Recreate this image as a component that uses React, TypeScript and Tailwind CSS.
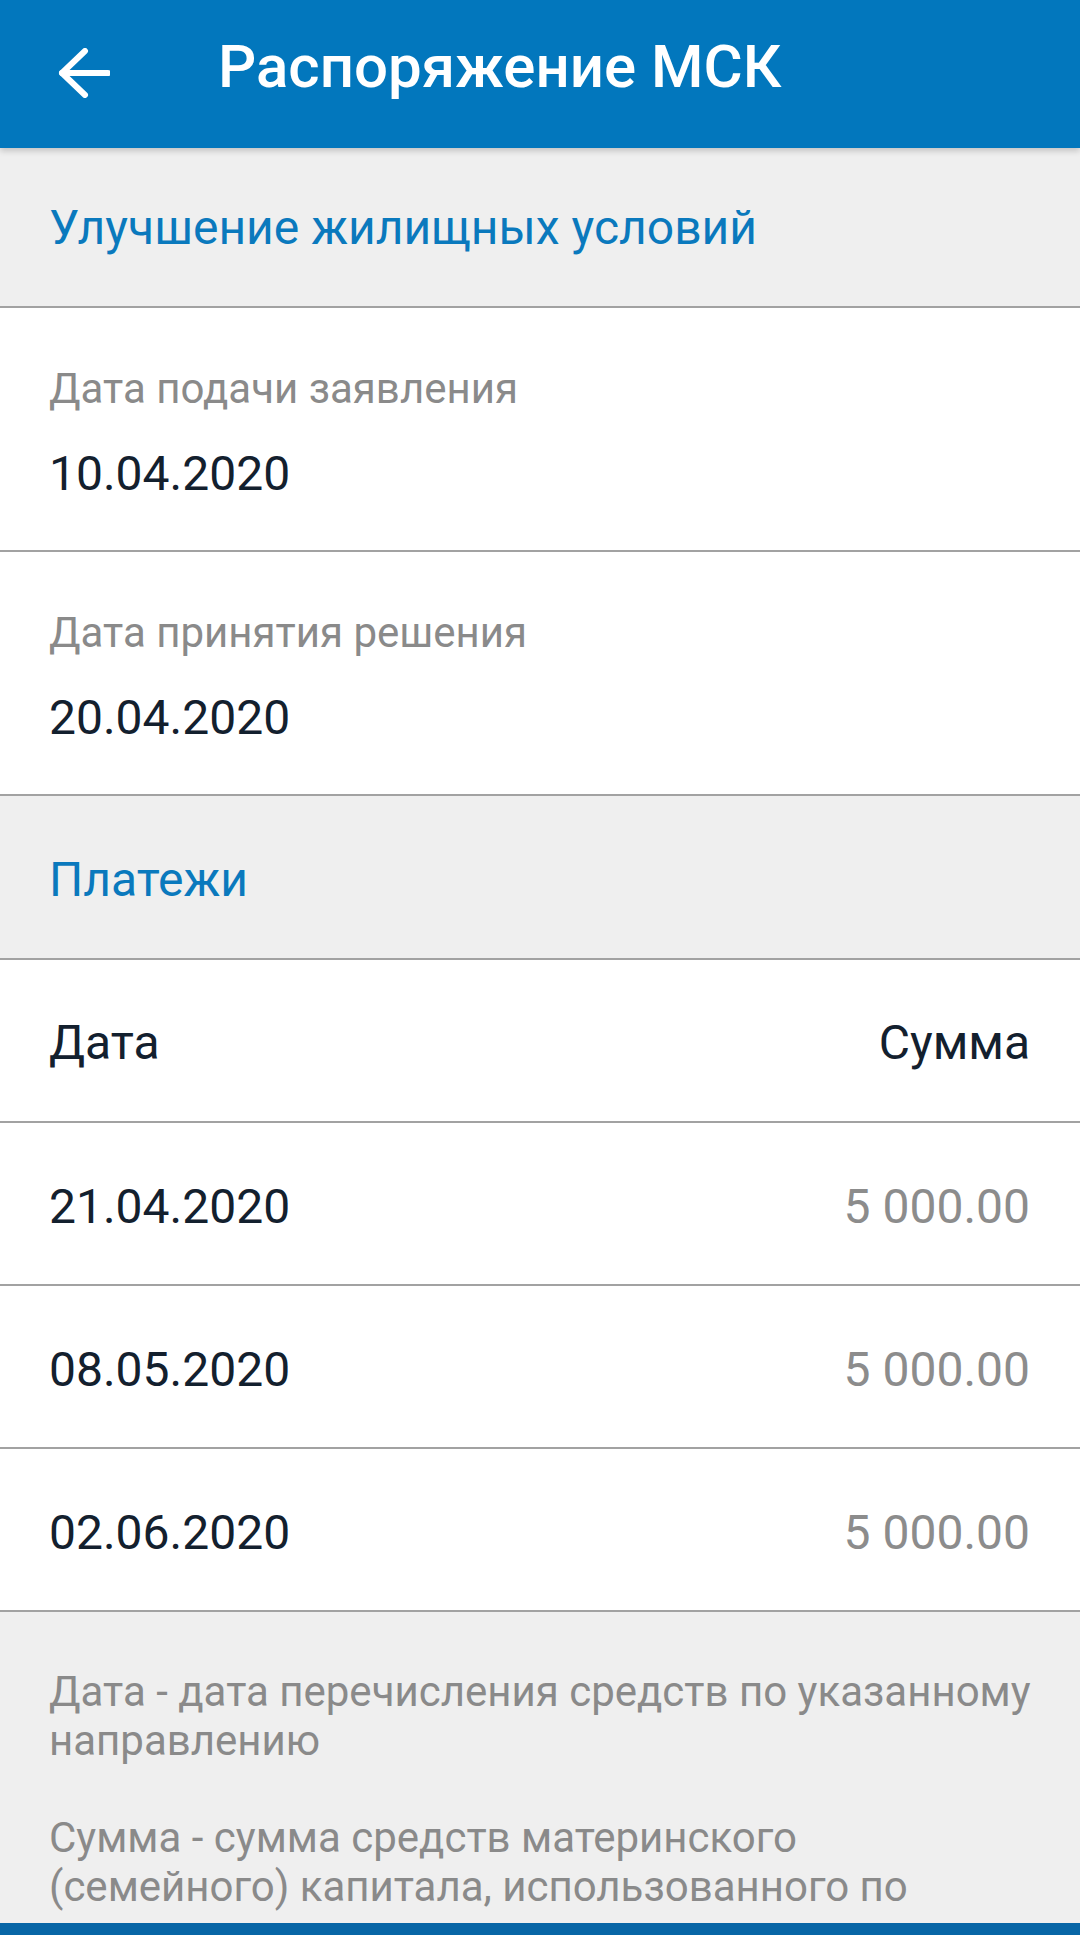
import React from 'react';

interface Payment {
  date: string;
  amount: string;
}

const payments: Payment[] = [
  { date: '21.04.2020', amount: '5 000.00' },
  { date: '08.05.2020', amount: '5 000.00' },
  { date: '02.06.2020', amount: '5 000.00' },
];

const BackArrow = () => (
  <svg width="52" height="50" viewBox="0 0 52 50" fill="none" stroke="white" strokeWidth="6" strokeLinecap="round" strokeLinejoin="round">
    <path d="M4 25H50" />
    <path d="M27 3L4 25L27 47" />
  </svg>
);

const SectionTitle = ({ title, className }: { title: string; className: string }) => (
  <div className={`${className} shrink-0 flex items-center px-[49px] bg-[#efefef] border-b-2 border-[#a2a2a2]`}>
    <span className="text-[48px] leading-[56px] text-[#0a79bd]">{title}</span>
  </div>
);

const Field = ({ label, value }: { label: string; value: string }) => (
  <div className="h-[244px] shrink-0 flex flex-col px-[49px] pt-[56px] bg-white border-b-2 border-[#a2a2a2]">
    <span className="text-[42px] leading-[50px] text-[#8a8a8a]">{label}</span>
    <span className="mt-[32px] text-[48px] leading-[56px] text-[#13202e]">{value}</span>
  </div>
);

const App = () => {
  return (
    <div className="h-[1935px] flex flex-col overflow-hidden bg-[#efefef] font-['Roboto','Noto_Sans',sans-serif]">
      {/* Toolbar */}
      <div className="h-[148px] shrink-0 flex items-center bg-[#0277bd] relative z-10 shadow-[0_3px_6px_rgba(0,0,0,0.18)]">
        <div className="ml-[58px] mt-[-2px] flex items-center">
          <BackArrow />
        </div>
        <h1 className="ml-[108px] mt-[-14px] text-[60px] leading-[68px] font-medium text-white">Распоряжение МСК</h1>
      </div>

      <SectionTitle title="Улучшение жилищных условий" className="h-[160px] pt-[2px]" />

      <Field label="Дата подачи заявления" value="10.04.2020" />
      <Field label="Дата принятия решения" value="20.04.2020" />

      <SectionTitle title="Платежи" className="h-[164px] pt-[6px]" />

      {/* Payments table */}
      <div className="h-[163px] shrink-0 flex items-center justify-between pl-[49px] pr-[50px] pt-[4px] bg-white border-b-2 border-[#a2a2a2]">
        <span className="text-[48px] leading-[56px] text-[#13202e]">Дата</span>
        <span className="text-[48px] leading-[56px] text-[#13202e]">Сумма</span>
      </div>
      {payments.map(p => (
        <div key={p.date} className="h-[163px] shrink-0 flex items-center justify-between pl-[49px] pr-[50px] pt-[6px] bg-white border-b-2 border-[#a2a2a2]">
          <span className="text-[48px] leading-[56px] text-[#13202e]">{p.date}</span>
          <span className="text-[48px] leading-[56px] text-[#8c8c8c]">{p.amount}</span>
        </div>
      ))}

      {/* Notes */}
      <div className="flex-1 min-h-0 overflow-hidden px-[49px] pt-[55px] text-[42px] leading-[49px] text-[#8a8a8a]">
        <p>
          Дата - дата перечисления средств по указанному
          <br />
          направлению
        </p>
        <p className="mt-[48px]">
          Сумма - сумма средств материнского
          <br />
          (семейного) капитала, использованного по
        </p>
      </div>

      <div className="h-[12px] shrink-0 bg-[#0866a6]" />
    </div>
  );
};

export default App;
